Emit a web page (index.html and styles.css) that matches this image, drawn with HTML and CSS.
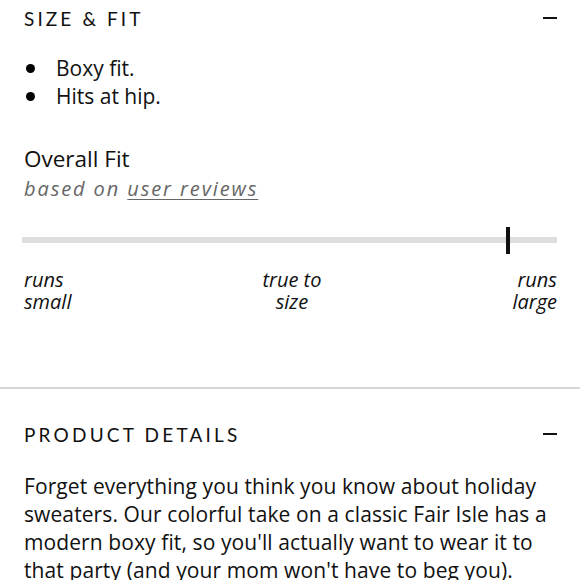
FILE: index.html
```html
<!DOCTYPE html>
<html>
<head>
<meta charset="utf-8">
<link rel="stylesheet" href="styles.css">
</head>
<body>
<section class="panel panel-size">
  <div class="panel-head">
    <h2 class="panel-title">SIZE &amp; FIT</h2>
    <span class="minus"></span>
  </div>
  <ul class="bullets">
    <li>Boxy fit.</li>
    <li>Hits at hip.</li>
  </ul>
  <h3 class="fit-title">Overall Fit</h3>
  <p class="fit-sub">based on <a class="fit-link">user reviews</a></p>
  <div class="meter">
    <div class="track"></div>
    <div class="marker"></div>
  </div>
  <div class="labels">
    <span class="lab lab-left">runs<br>small</span>
    <span class="lab lab-mid">true to<br>size</span>
    <span class="lab lab-right">runs<br>large</span>
  </div>
</section>
<section class="panel panel-details">
  <div class="panel-head">
    <h2 class="panel-title wide">PRODUCT DETAILS</h2>
    <span class="minus"></span>
  </div>
  <p class="desc">Forget everything you think you know about holiday sweaters. Our colorful take on a classic Fair Isle has a modern boxy fit, so you'll actually want to wear it to that party (and your mom won't have to beg you).</p>
</section>
</body>
</html>
```
FILE: styles.css
```css
html, body {
  margin: 0;
  padding: 0;
  background: #fff;
}
body {
  font-family: "Open Sans", Lato, sans-serif;
  color: #111;
  width: 580px;
  overflow: hidden;
}
.panel {
  padding: 0 23px 0 24px;
}
.panel-size {
  border-bottom: 2px solid #d6d6d6;
  padding-bottom: 74px;
}
.panel-head {
  display: flex;
  justify-content: space-between;
  align-items: center;
}
.panel-size .panel-head {
  height: 36px;
}
.panel-details .panel-head {
  padding-top: 30px;
  height: 30px;
}
.panel-title {
  margin: 0;
  font-family: Lato, sans-serif;
  font-size: 19px;
  font-weight: 400;
  letter-spacing: 3.1px;
}
.panel-title.wide {
  letter-spacing: 3.2px;
}
.minus {
  display: block;
  width: 14px;
  height: 2px;
  background: #111;
}
.bullets {
  list-style: none;
  margin: 18px 0 0;
  padding: 0;
  font-size: 21px;
  line-height: 28px;
}
.bullets li {
  position: relative;
  padding-left: 32px;
}
.bullets li::before {
  content: "";
  position: absolute;
  left: 2px;
  top: 10px;
  width: 9px;
  height: 9px;
  border-radius: 50%;
  background: #000;
}
.fit-title {
  margin: 35px 0 0;
  font-size: 22.5px;
  font-weight: 400;
  line-height: 28px;
}
.fit-sub {
  margin: 2px 0 0;
  font-size: 20px;
  font-style: italic;
  color: #666;
  letter-spacing: 1.9px;
  line-height: 28px;
}
.fit-link {
  text-decoration: underline;
  text-decoration-thickness: 1px;
  text-underline-offset: 3px;
}
.meter {
  position: relative;
  margin-top: 24px;
  height: 28px;
}
.track {
  position: absolute;
  left: -2px;
  right: 0;
  top: 10px;
  height: 6px;
  background: #dedede;
}
.marker {
  position: absolute;
  left: 482px;
  top: 0;
  width: 4px;
  height: 27px;
  background: #111;
}
.labels {
  display: flex;
  justify-content: space-between;
  margin-top: 14px;
  font-size: 20px;
  font-style: italic;
  line-height: 22px;
}
.lab-mid {
  text-align: center;
}
.lab-right {
  text-align: right;
}
.desc {
  margin: 23px 0 0;
  font-size: 21px;
  letter-spacing: 0.1px;
  line-height: 28px;
  color: #111;
}
```
